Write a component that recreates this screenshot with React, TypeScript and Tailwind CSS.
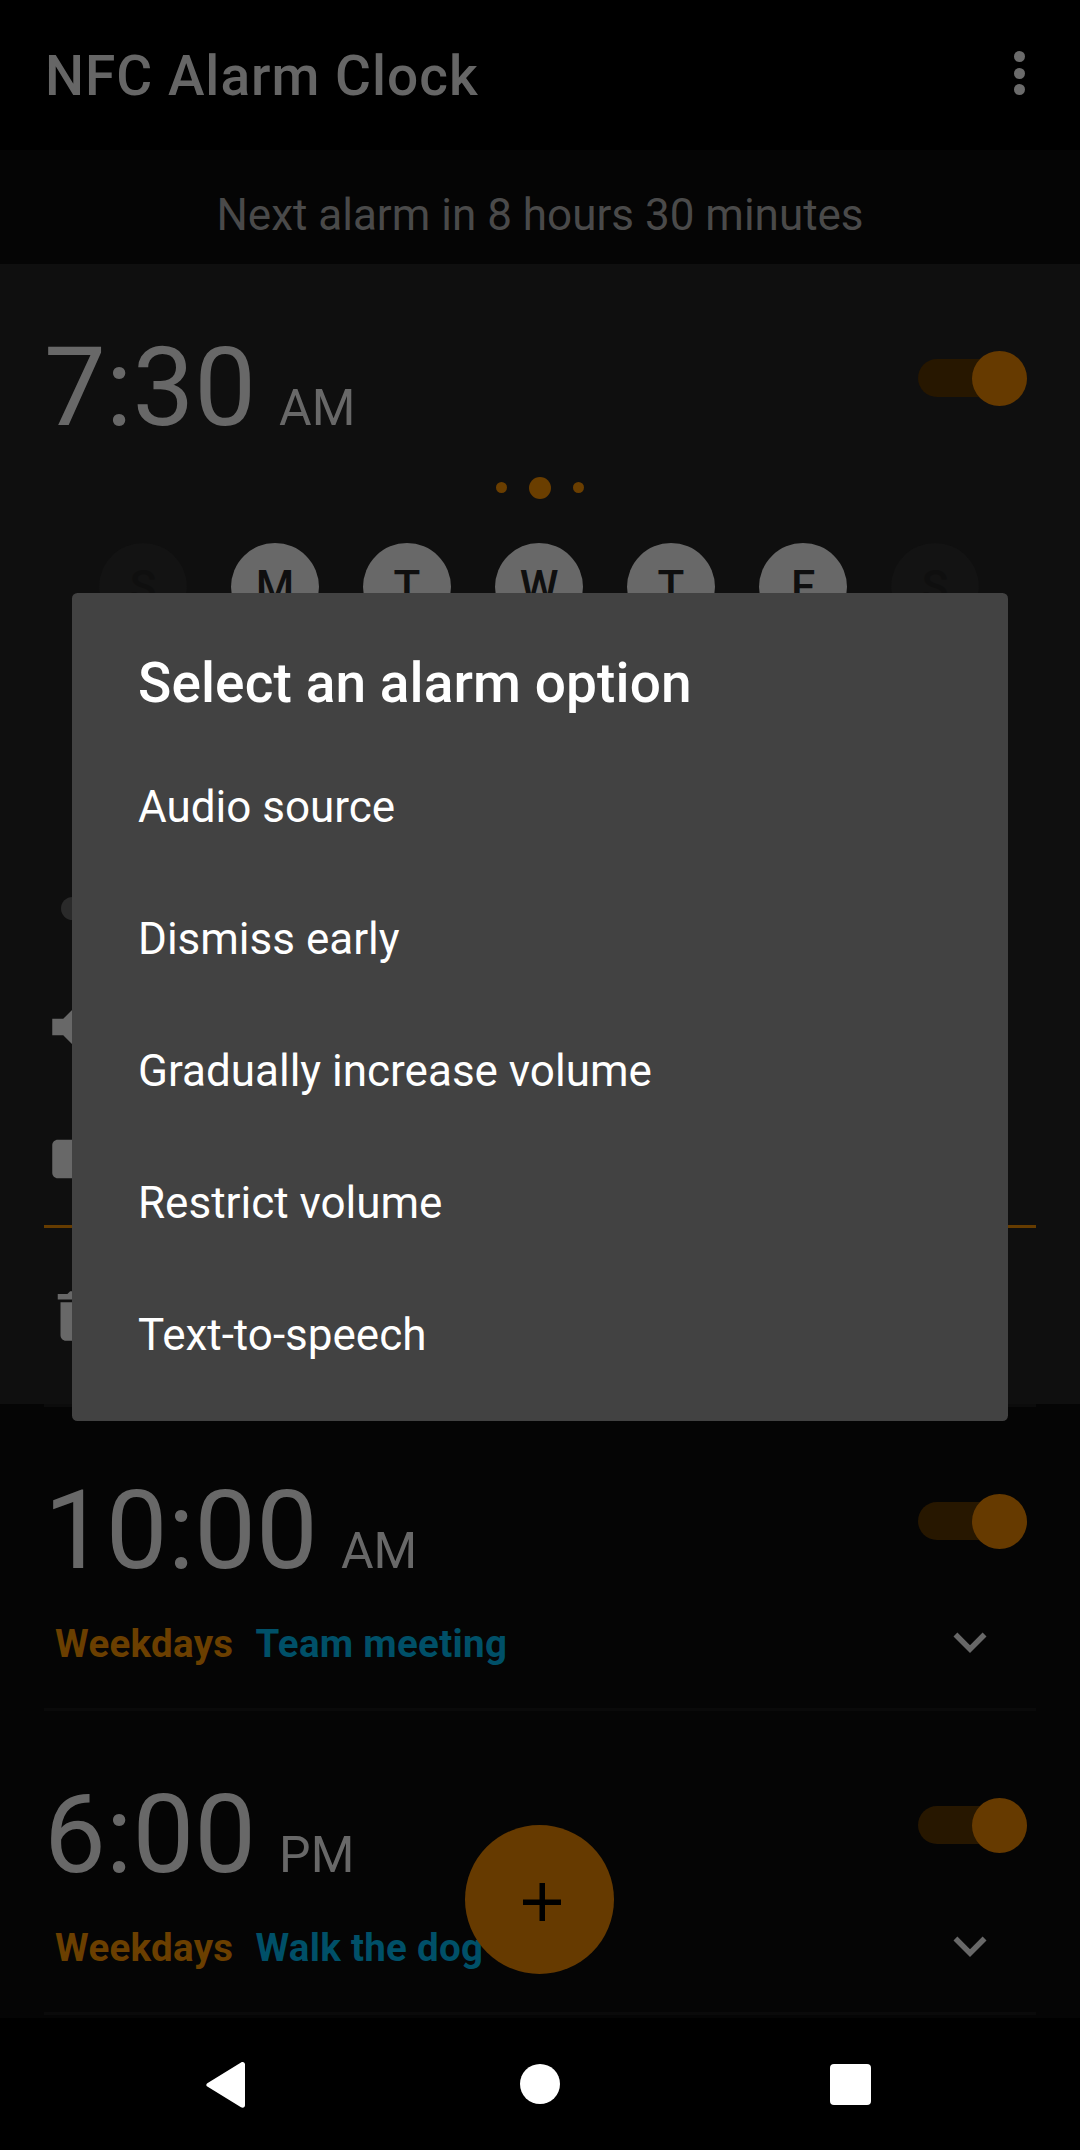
import React from "react";

type Alarm = { time: string; meridiem: string; days: string; name: string };

const alarms: Alarm[] = [
  { time: "10:00", meridiem: "AM", days: "Weekdays", name: "Team meeting" },
  { time: "6:00", meridiem: "PM", days: "Weekdays", name: "Walk the dog" },
];

const week = [
  { label: "S", on: false },
  { label: "M", on: true },
  { label: "T", on: true },
  { label: "W", on: true },
  { label: "T", on: true },
  { label: "F", on: true },
  { label: "S", on: false },
];

const options = [
  "Audio source",
  "Dismiss early",
  "Gradually increase volume",
  "Restrict volume",
  "Text-to-speech",
];

function Icon({ d, className }: { d: string; className?: string }) {
  return (
    <svg viewBox="0 0 24 24" className={`size-[66px] shrink-0 fill-[#686868] ${className ?? ""}`}>
      <path d={d} />
    </svg>
  );
}

function Toggle() {
  return (
    <div className="mt-[17.5px] mr-[9.5px] flex h-[55px] w-[108.5px] items-center">
      <div className="flex h-[38.5px] w-full items-center justify-end rounded-full bg-[#271700]">
        <div className="size-[55px] shrink-0 rounded-full bg-[#663a00]" />
      </div>
    </div>
  );
}

function TimeRow({ time, meridiem }: { time: string; meridiem: string }) {
  return (
    <div className="flex items-start justify-between pt-[69px]">
      <div className="flex items-baseline gap-[23px] text-[#686868]">
        <span className="text-[110px] leading-[110px]">{time}</span>
        <span className="text-[50px] leading-[50px]">{meridiem}</span>
      </div>
      <Toggle />
    </div>
  );
}

function ExpandedAlarm() {
  return (
    <section className="flex h-[1140px] shrink-0 flex-col bg-[#0f0f0f] px-[44px]">
      <TimeRow time="7:30" meridiem="AM" />
      <div className="mt-[34px] flex items-start justify-center gap-[22px]">
        <span className="mt-[5px] size-[11px] rounded-full bg-[#6a3e00]" />
        <span className="size-[22px] rounded-full bg-[#6a3e00]" />
        <span className="mt-[5px] size-[11px] rounded-full bg-[#6a3e00]" />
      </div>
      <div className="mt-[44px] flex justify-center gap-[44px] pr-[2px]">
        {week.map((day, i) => (
          <span
            key={i}
            className={`flex size-[88px] items-center justify-center rounded-full text-[44px] leading-[88px] font-medium ${
              day.on ? "bg-[#686868] text-[#0f0f0f]" : "bg-[#131313] text-[#0f0f0f]"
            }`}
          >
            {day.label}
          </span>
        ))}
      </div>
      <div className="mt-[266px] ml-[17px] size-[23px] rounded-full bg-[#2a2a2a]" />
      <Icon className="mt-[74px]" d="M3 9v6h4l5 5V4L7 9H3z" />
      <Icon
        className="mt-[65.5px]"
        d="M17.63 5.84C17.27 5.33 16.67 5 16 5H5C3.9 5 3 5.9 3 7v10c0 1.1.9 2 2 2h11c.67 0 1.27-.33 1.63-.84L22 12l-4.37-6.16z"
      />
      <div className="mt-[33.5px] h-[3px] shrink-0 bg-[#663c00]" />
      <Icon
        className="mt-[55px]"
        d="M6 19c0 1.1.9 2 2 2h8c1.1 0 2-.9 2-2V7H6v12zM19 4h-3.5l-1-1h-5l-1 1H5v2h14V4z"
      />
    </section>
  );
}

function AlarmRow({ alarm }: { alarm: Alarm }) {
  return (
    <section className="flex h-[304px] shrink-0 flex-col px-[44px]">
      <TimeRow time={alarm.time} meridiem={alarm.meridiem} />
      <div className="mt-[23px] flex h-[66px] items-center justify-between pr-[33px] pl-[11px]">
        <div className="flex gap-[22px] pt-[4px] text-[38.5px] leading-[44px] font-bold tracking-[0.3px]">
          <span className="text-[#6b3f00]">{alarm.days}</span>
          <span className="text-[#005068]">{alarm.name}</span>
        </div>
        <Icon d="M16.59 8.59 12 13.17 7.41 8.59 6 10l6 6 6-6z" />
      </div>
      <div className="mt-auto h-[3px] bg-[#0a0a0a]" />
    </section>
  );
}

function NavigationBar() {
  return (
    <nav className="flex h-[132px] shrink-0 items-start bg-black pt-[44px] pl-[206px]">
      <svg viewBox="0 0 40 46" className="h-[46px] w-[40px] fill-white">
        <path d="M35 .6 1.3 21.2c-1.3.8-1.3 2.6 0 3.4L35 45.3c1.9 1.1 4 .3 4-2V2.6c0-2.3-2.1-3.1-4-2z" />
      </svg>
      <span className="mt-[2px] ml-[274px] size-[40px] rounded-full bg-white" />
      <span className="mt-[2px] ml-[270px] size-[41px] rounded-[4px] bg-white" />
    </nav>
  );
}

function OptionsDialog() {
  return (
    <div
      role="dialog"
      className="absolute top-[593px] left-[72px] h-[828px] w-[936px] rounded-[5.5px] bg-[#424242] px-[66px] pt-[58px] text-white"
    >
      <h2 className="mb-[26px] text-[55px] leading-[64px] font-medium tracking-[0.1px]">
        Select an alarm option
      </h2>
      <ul>
        {options.map((option) => (
          <li key={option} className="text-[44px] leading-[132px]">
            {option}
          </li>
        ))}
      </ul>
    </div>
  );
}

export default function App() {
  return (
    <main className="relative flex h-[2150px] w-[1080px] flex-col overflow-hidden bg-[#050505] font-['Roboto',sans-serif]">
      <header className="flex h-[150px] shrink-0 items-center justify-between bg-black pr-[55.5px] pl-[45px]">
        <h1 className="pt-[2px] text-[55px] leading-[64px] font-medium tracking-[1px] text-[#666666]">
          NFC Alarm Clock
        </h1>
        <div className="mb-[4px] flex flex-col gap-[5.5px]">
          <span className="size-[11px] rounded-full bg-[#6b6b6b]" />
          <span className="size-[11px] rounded-full bg-[#6b6b6b]" />
          <span className="size-[11px] rounded-full bg-[#6b6b6b]" />
        </div>
      </header>
      <div className="flex h-[114px] shrink-0 items-center justify-center pt-[16px] text-[44px] leading-[52px] text-[#4a4a4a]">
        Next alarm in 8 hours 30 minutes
      </div>
      <ExpandedAlarm />
      <div className="mx-[44px] h-[3px] shrink-0 bg-[#0c0c0c]" />
      {alarms.map((alarm) => (
        <AlarmRow key={alarm.name} alarm={alarm} />
      ))}
      <div className="h-[3px] shrink-0" />
      <NavigationBar />
      <button className="absolute top-[1825px] left-[465px] flex size-[149px] items-center justify-center rounded-full bg-[#663a00] pt-[5px] pl-[5px]">
        <svg viewBox="0 0 14 14" className="size-[38.5px] fill-black">
          <path d="M14 8H8v6H6V8H0V6h6V0h2v6h6z" />
        </svg>
      </button>
      <OptionsDialog />
    </main>
  );
}
